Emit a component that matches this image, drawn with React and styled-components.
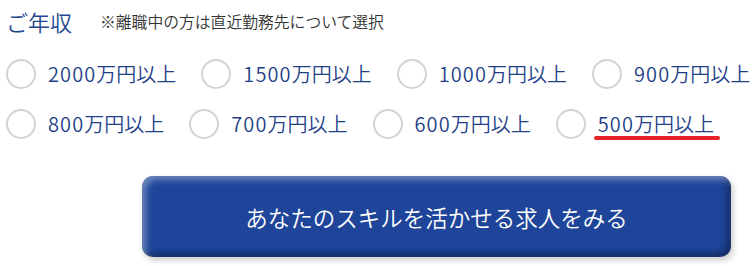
import React from "react";
import styled, { createGlobalStyle } from "styled-components";

const GlobalStyle = createGlobalStyle`
  body {
    margin: 0;
    background: #fff;
    font-family: "Noto Sans CJK JP", "Noto Sans", sans-serif;
  }
`;

const Page = styled.div`
  width: 752px;
  height: 266px;
  overflow: hidden;
`;

const Header = styled.div`
  display: flex;
  align-items: center;
  height: 42px;
  padding-left: 6px;
`;

const Title = styled.h2`
  margin: 0;
  font-size: 22px;
  font-weight: 350;
  color: #24478f;
`;

const Note = styled.span`
  margin-left: 28px;
  font-size: 15.8px;
  font-weight: 350;
  color: #333;
`;

const Options = styled.div`
  display: flex;
  flex-direction: column;
  gap: 20px;
  margin-top: 17px;
  padding-left: 6px;
`;

const Row = styled.div`
  display: flex;
  gap: 25px;
`;

const Option = styled.label`
  display: flex;
  align-items: center;
  flex-shrink: 0;
  gap: 12px;
  height: 30px;
  white-space: nowrap;
  cursor: pointer;
`;

const Radio = styled.span`
  box-sizing: border-box;
  width: 30px;
  height: 30px;
  border-radius: 50%;
  border: 2px solid #d3d3d3;
  background: #fff;
  flex-shrink: 0;
`;

const Label = styled.span`
  position: relative;
  font-size: 20px;
  font-weight: 350;
  line-height: 30px;
  color: #1f3f88;

  ${(p) =>
    p.$marked &&
    `
    &::after {
      content: "";
      position: absolute;
      left: -4px;
      right: -6px;
      bottom: -1px;
      height: 4px;
      border-radius: 2px;
      background: #e8202a;
    }
  `}
`;

const Num = styled.span`
  letter-spacing: 1.1px;
`;

const Button = styled.button`
  display: flex;
  align-items: center;
  justify-content: center;
  box-sizing: border-box;
  width: 589px;
  height: 81px;
  margin: 37px 0 0 142px;
  border: none;
  border-radius: 11px;
  background: #1e4599;
  color: #fff;
  font-family: inherit;
  font-size: 22.5px;
  font-weight: 350;
  cursor: pointer;
  box-shadow:
    inset 4px 4px 6px rgba(255, 255, 255, 0.35),
    inset -4px -4px 6px rgba(0, 0, 0, 0.35),
    2px 3px 6px rgba(0, 0, 0, 0.22);
`;

const rows = [
  [2000, 1500, 1000, 900],
  [800, 700, 600, 500],
];

export default function App() {
  return (
    <Page>
      <GlobalStyle />
      <Header>
        <Title>ご年収</Title>
        <Note>※離職中の方は直近勤務先について選択</Note>
      </Header>
      <Options>
        {rows.map((row, i) => (
          <Row key={i}>
            {row.map((amount) => (
              <Option key={amount}>
                <Radio />
                <Label $marked={amount === 500}>
                  <Num>{amount}</Num>万円以上
                </Label>
              </Option>
            ))}
          </Row>
        ))}
      </Options>
      <Button>あなたのスキルを活かせる求人をみる</Button>
    </Page>
  );
}
